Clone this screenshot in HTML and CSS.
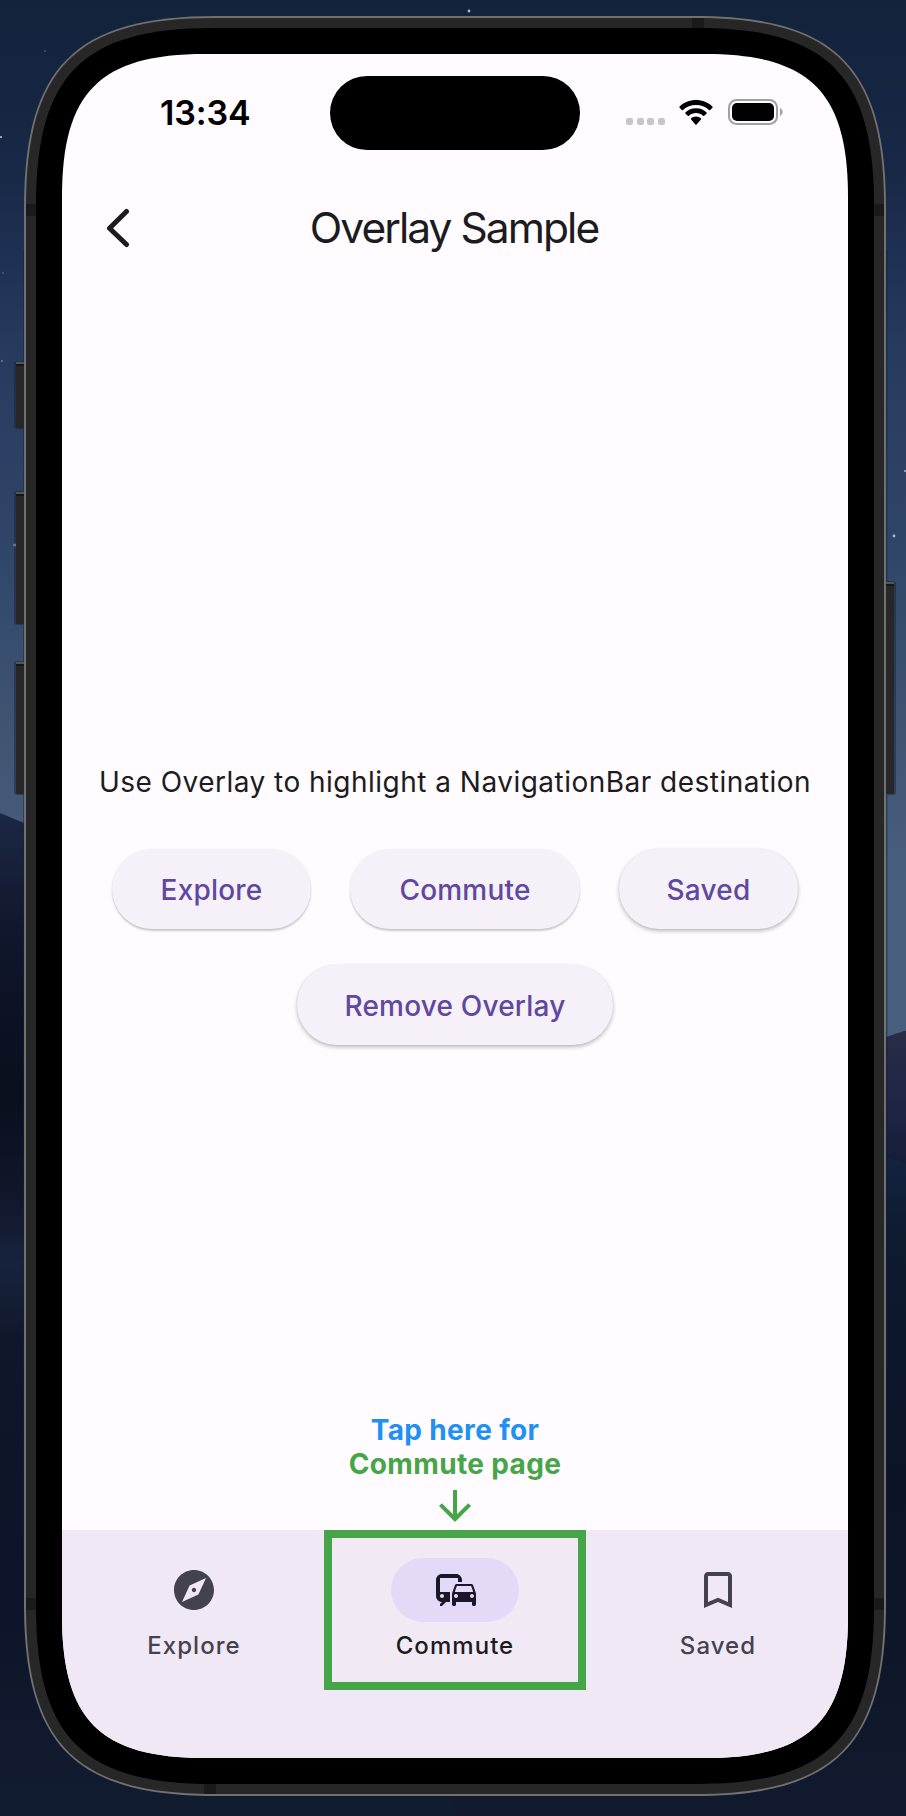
FILE: index.html
```
<!DOCTYPE html>
<html lang="en">
<head>
<meta charset="utf-8">
<title>Overlay Sample</title>
<link rel="stylesheet" href="styles.css">
</head>
<body>
<svg class="backdrop" viewBox="0 0 906 1816" aria-hidden="true">
  <defs>
    <linearGradient id="sky" x1="0" y1="0" x2="0" y2="1030" gradientUnits="userSpaceOnUse">
      <stop offset="0" stop-color="#13233b"/><stop offset=".17" stop-color="#182847"/>
      <stop offset=".33" stop-color="#263a5e"/><stop offset=".52" stop-color="#2f4568"/>
      <stop offset=".7" stop-color="#3e5471"/><stop offset=".86" stop-color="#495f7e"/>
    </linearGradient>
    <linearGradient id="dune" x1="0" y1="810" x2="0" y2="1816" gradientUnits="userSpaceOnUse">
      <stop offset="0" stop-color="#1b2844"/><stop offset=".13" stop-color="#10162b"/>
      <stop offset=".28" stop-color="#090f1c"/><stop offset=".38" stop-color="#11162a"/>
      <stop offset=".45" stop-color="#16233d"/><stop offset=".53" stop-color="#10172a"/>
      <stop offset=".75" stop-color="#0d1328"/><stop offset="1" stop-color="#121c30"/>
    </linearGradient>
    <linearGradient id="ridge" x1="0" y1="1030" x2="0" y2="1170" gradientUnits="userSpaceOnUse">
      <stop offset="0" stop-color="#282e48"/><stop offset=".6" stop-color="#1e2442"/><stop offset="1" stop-color="#141c36"/>
    </linearGradient>
    <linearGradient id="slope" x1="0" y1="1155" x2="0" y2="1816" gradientUnits="userSpaceOnUse">
      <stop offset="0" stop-color="#14233f"/><stop offset=".13" stop-color="#0e1a30"/><stop offset=".5" stop-color="#0c1326"/><stop offset="1" stop-color="#111a2e"/>
    </linearGradient>
  </defs>
  <rect width="906" height="1816" fill="url(#sky)"/>
  <path d="M0 813 24 823 453 900V1816H0Z" fill="url(#dune)"/>
  <path d="M453 1060 886 1037 904 1031H906V1180H453Z" fill="url(#ridge)"/>
  <path d="M453 1130 886 1157 906 1164V1816H453Z" fill="url(#slope)"/>
  <g fill="#a9b9cf">
    <circle cx="469" cy="11" r="1.4"/><circle cx="1" cy="137" r="1.1"/><circle cx="2" cy="361" r="1.2" opacity=".4"/>
    <circle cx="894" cy="536" r="1.4"/><circle cx="905" cy="471" r="1"/><circle cx="3" cy="273" r="1" opacity=".3"/>
    <circle cx="45" cy="51" r="1" opacity=".3"/><circle cx="15" cy="545" r="1.6"/>
  </g>
  <g fill="#13203a" opacity=".45">
    <rect x="14" y="361" width="12" height="68" rx="3"/><rect x="14" y="491" width="12" height="134" rx="3"/>
    <rect x="14" y="661" width="12" height="134" rx="3"/><rect x="884" y="581" width="12" height="214" rx="3"/>
    <rect x="23" y="250" width="1.5" height="1310"/><rect x="886" y="250" width="1.5" height="1310"/>
  </g>
  <g fill="#272727">
    <rect x="16" y="362" width="12" height="66" rx="1.5"/><rect x="16" y="492" width="12" height="132" rx="1.5"/>
    <rect x="16" y="662" width="12" height="132" rx="1.5"/><rect x="882" y="582" width="12" height="212" rx="1.5"/>
  </g>
  <g fill="#555">
    <rect x="16" y="362" width="9" height="2"/><rect x="16" y="492" width="9" height="2"/>
    <rect x="16" y="662" width="9" height="2"/><rect x="885" y="582" width="9" height="2"/>
  </g>
  <g fill="#171717">
    <rect x="16" y="364" width="9" height="2"/><rect x="16" y="494" width="9" height="2"/>
    <rect x="16" y="664" width="9" height="2"/><rect x="885" y="584" width="9" height="2"/>
  </g>
  <path fill="#717171" d="M216 16H694c141 0 192 51 192 192V1604c0 141-51 192-192 192H216c-141 0-192-51-192-192V208c0-141 51-192 192-192Z"/>
  <path fill="#272727" d="M214.500 18H695.500c138.500 0 188.500 50 188.500 188.500V1605.500c0 138.500-50 188.500-188.500 188.500H214.500c-138.500 0-188.500-50-188.500-188.500V206.500c0-138.500 50-188.500 188.500-188.500Z"/>
  <g fill="#1a1a1a">
    <rect x="692" y="18" width="12" height="12"/><rect x="26" y="204" width="12" height="12"/><rect x="872" y="204" width="12" height="12"/>
    <rect x="26" y="1598" width="12" height="12"/><rect x="872" y="1598" width="12" height="12"/><rect x="204" y="1782" width="12" height="12"/>
  </g>
  <path fill="#000" d="M213 28H697c130 0 177 47 177 177V1607c0 130-47 177-177 177H213c-130 0-177-47-177-177V205c0-130 47-177 177-177Z"/>
</svg>

<main class="screen">
  <header class="status">
    <time class="clock">13:34</time>
    <div class="island"></div>
    <div class="signals">
      <span class="dots"><i></i><i></i><i></i><i></i></span>
      <svg class="wifi" viewBox="0 0 34 25"><path d="M17 0C23.5 0 29.3 2.500 33.4 6.500 33.800 6.900 33.800 7.300 33.400 7.700L31.200 9.900C30.800 10.300 30.400 10.300 30 9.900 26.500 6.700 22 4.900 17 4.900S7.500 6.700 4 9.900C3.600 10.300 3.200 10.300 2.800 9.900L.6 7.700C.2 7.300.2 6.900.6 6.500 4.700 2.500 10.500 0 17 0Z"/><path d="M17 8.200c4.200 0 7.900 1.600 10.600 4.200.4.400.4.800 0 1.200l-2.300 2.200c-.4.400-.8.400-1.200 0-1.900-1.700-4.400-2.700-7.100-2.700s-5.200 1-7.100 2.700c-.4.400-.8.400-1.200 0l-2.300-2.200c-.4-.4-.4-.8 0-1.200C9.100 9.800 12.800 8.200 17 8.200Z"/><path d="M17 16.400c1.900 0 3.600.7 4.900 1.900.4.400.4.800 0 1.200l-4.300 4.900c-.4.400-.8.400-1.200 0l-4.300-4.900c-.4-.4-.4-.8 0-1.200 1.300-1.200 3-1.900 4.900-1.900Z"/></svg>
      <svg class="battery" viewBox="0 0 55 26"><rect x="1" y="1" width="48" height="24" rx="7.500" fill="none" stroke="#a19fa1" stroke-width="2"/><rect x="4" y="4" width="42" height="18" rx="5"/><path d="M52 9c1.600.8 2.600 2.300 2.600 4s-1 3.200-2.600 4Z" fill="#a19fa1"/></svg>
    </div>
  </header>

  <div class="appbar">
    <svg class="back" viewBox="0 0 24 40"><path d="M20.500 3.500 3.500 20.200 20.500 36.500" fill="none" stroke="#1c1b1f" stroke-width="5" stroke-linecap="round" stroke-linejoin="round"/></svg>
    <h1 class="title">Overlay Sample</h1>
  </div>

  <section class="content">
    <p class="lead">Use Overlay to highlight a NavigationBar destination</p>
    <div class="row">
      <button class="btn explore">Explore</button>
      <button class="btn commute">Commute</button>
      <button class="btn saved raised">Saved</button>
    </div>
    <button class="btn remove raised">Remove Overlay</button>
  </section>

  <div class="hint">
    <span class="hint-top">Tap here for</span>
    <span class="hint-page">Commute page</span>
    <svg class="arrow" viewBox="0 0 24 24"><path d="m20 12-1.410-1.410L13 16.170V4h-2v12.170l-5.580-5.590L4 12l8 8 8-8z"/></svg>
  </div>

  <nav class="navbar">
    <div class="dest">
      <span class="pill"><svg class="icon" viewBox="0 0 24 24"><path d="M12 10.900c-.61 0-1.100.49-1.100 1.100s.49 1.100 1.100 1.100c.61 0 1.100-.49 1.100-1.100s-.49-1.100-1.100-1.100zM12 2C6.480 2 2 6.480 2 12s4.480 10 10 10 10-4.480 10-10S17.520 2 12 2zm2.190 12.190L6 18l3.810-8.190L18 6l-3.810 8.190z"/></svg></span>
      <span class="label">Explore</span>
    </div>
    <div class="dest active">
      <span class="pill"><svg class="icon" viewBox="0 0 24 24"><path d="M12 4H5C3.340 4 2 5.340 2 7v8c0 1.660 1.340 3 3 3l-1 1v1h1l2-2.030L9 18v-5H4V5.980L13 6v2h2V7c0-1.660-1.340-3-3-3zM5 14c.55 0 1 .45 1 1s-.45 1-1 1-1-.45-1-1 .45-1 1-1zm15.570-4.340c-.14-.4-.52-.66-.97-.66h-7.190c-.46 0-.83.26-.98.66L10 13.770l.01 5.510c0 .38.31.72.69.72h.62c.38 0 .68-.38.68-.76V18h8v1.240c0 .38.31.76.69.76h.61c.38 0 .69-.34.69-.72l.01-1.370v-4.140l-1.430-4.110zm-8.160.34h7.190l1.030 3h-9.250l1.030-3zM12 16c-.55 0-1-.45-1-1s.45-1 1-1 1 .45 1 1-.45 1-1 1zm8 0c-.55 0-1-.45-1-1s.45-1 1-1 1 .45 1 1-.45 1-1 1z"/></svg></span>
      <span class="label">Commute</span>
    </div>
    <div class="dest">
      <span class="pill"><svg class="icon" viewBox="0 0 24 24"><path d="M17 3H7c-1.100 0-2 .9-2 2v16l7-3 7 3V5c0-1.100-.9-2-2-2zm0 15-5-2.180L7 18V5h10v13z"/></svg></span>
      <span class="label">Saved</span>
    </div>
  </nav>
</main>
</body>
</html>
```
FILE: styles.css
```
* { box-sizing: border-box; }

body {
  margin: 0;
  width: 906px;
  height: 1816px;
  padding: 54px 58px 58px 62px;
  overflow: hidden;
  background: #13233b;
  font-family: Inter, "Liberation Sans", sans-serif;
}

.backdrop {
  position: absolute;
  inset: 0;
  width: 906px;
  height: 1816px;
  z-index: -1;
}

.screen {
  display: flex;
  flex-direction: column;
  width: 786px;
  height: 1704px;
  background: #fffbfe;
  color: #1c1b1f;
  clip-path: path("M143 0H643c105 0 143 38 143 143V1561c0 105-38 143-143 143H143c-105 0-143-38-143-143V143c0-105 38-143 143-143Z");
}

.status {
  display: grid;
  grid-template-columns: 268px 250px 268px;
  height: 118px;
  padding-top: 22px;
}

.clock {
  padding-left: 98px;
  font-size: 34px;
  font-weight: 600;
  line-height: 74px;
  letter-spacing: -0.100px;
  color: #000;
  white-space: nowrap;
}

.island {
  height: 74px;
  border-radius: 37px;
  background: #000;
}

.signals {
  display: flex;
  align-items: flex-start;
  padding: 23px 0 0 46px;
}

.dots {
  display: flex;
  gap: 3.700px;
  padding-top: 19px;
}

.dots i {
  width: 7px;
  height: 7px;
  border-radius: 2.300px;
  background: #c8c4c7;
}

.wifi { width: 34px; height: 25px; margin: 1px 0 0 13.500px; }
.battery { width: 55px; height: 26px; margin-left: 15.500px; }

.appbar {
  display: grid;
  grid-template-columns: 60px 1fr 60px;
  align-items: center;
  height: 112px;
}

.back { width: 24px; height: 40px; margin-left: 44px; }

.title {
  margin: 0;
  padding-right: 2px;
  font-size: 42.500px;
  font-weight: 400;
  line-height: 56px;
  letter-spacing: -1.950px;
  text-align: center;
  white-space: nowrap;
}

.content {
  display: flex;
  flex-direction: column;
  align-items: center;
  flex: 1;
  padding-top: 478px;
}

.lead {
  margin: 0;
  font-size: 28px;
  line-height: 40px;
  letter-spacing: 0.480px;
  white-space: nowrap;
}

.row {
  display: flex;
  gap: 39px;
  margin: 47px 0 36px;
}

.btn {
  height: 80px;
  padding: 2px 0 0;
  border: 0;
  border-radius: 40px;
  background: #f6f1f8;
  box-shadow: 0 2px 2px rgba(0, 0, 0, .2), 0 0 2px rgba(0, 0, 0, .05);
  color: #6048a0;
  font: 500 28px/78px Inter, "Liberation Sans", sans-serif;
  letter-spacing: 0.200px;
  white-space: nowrap;
}

.raised { box-shadow: 0 2px 4px rgba(0, 0, 0, .27), 0 0 2px rgba(0, 0, 0, .05); }
.explore { width: 199px; }
.commute { width: 230px; }
.saved { width: 179px; }
.remove { width: 316px; }

.hint {
  display: flex;
  flex-direction: column;
  align-items: center;
  height: 117px;
  font-size: 28px;
  font-weight: 700;
  line-height: 34px;
  letter-spacing: 0.350px;
  white-space: nowrap;
}

.hint-top { color: #2190f3; }
.hint-page { color: #46a548; }
.arrow { width: 48px; height: 48px; margin-top: 1px; fill: #46a548; }

.navbar {
  display: grid;
  grid-template-columns: 262px 262px 262px;
  height: 228px;
  background: #f0e9f5;
}

.dest {
  display: flex;
  flex-direction: column;
  align-items: center;
  height: 160px;
  padding: 28px 0 0 2px;
  color: #45424f;
}

.active {
  padding: 20px 0 0;
  border: 8px solid #46a548;
  background: #f1eaf4;
  color: #1c1b1f;
}

.pill {
  display: grid;
  place-items: center;
  width: 128px;
  height: 64px;
  border-radius: 32px;
}

.active .pill { padding-left: 2px; background: #e4daf7; color: #1c1728; }
.icon { width: 48px; height: 48px; fill: currentColor; }

.label {
  margin-top: 8px;
  font-size: 24px;
  font-weight: 450;
  line-height: 32px;
  letter-spacing: 1.050px;
  white-space: nowrap;
}
```
